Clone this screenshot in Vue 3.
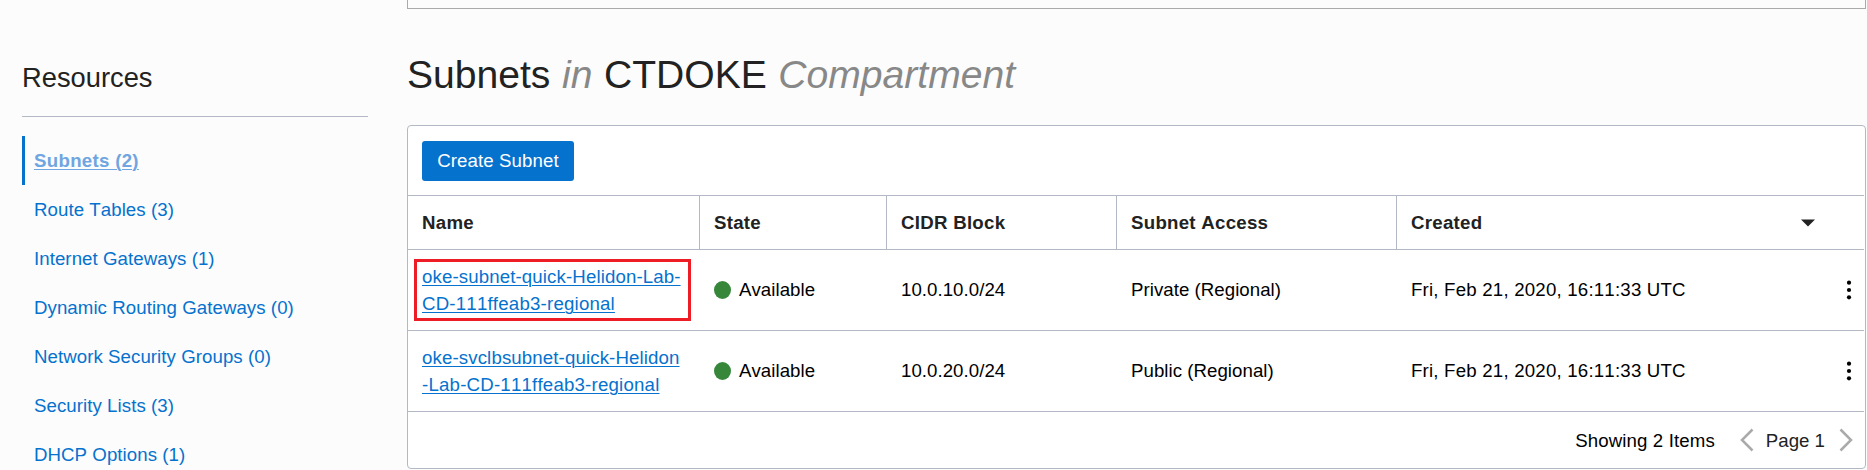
<script setup>
const resources = [
  { label: 'Subnets (2)', active: true },
  { label: 'Route Tables (3)' },
  { label: 'Internet Gateways (1)' },
  { label: 'Dynamic Routing Gateways (0)' },
  { label: 'Network Security Groups (0)' },
  { label: 'Security Lists (3)' },
  { label: 'DHCP Options (1)' },
]
const columns = ['Name', 'State', 'CIDR Block', 'Subnet Access', 'Created']
const subnets = [
  {
    name: ['oke-subnet-quick-Helidon-Lab-', 'CD-111ffeab3-regional'],
    state: 'Available', cidr: '10.0.10.0/24', access: 'Private (Regional)',
    created: 'Fri, Feb 21, 2020, 16:11:33 UTC', marked: true,
  },
  {
    name: ['oke-svclbsubnet-quick-Helidon', '-Lab-CD-111ffeab3-regional'],
    state: 'Available', cidr: '10.0.20.0/24', access: 'Public (Regional)',
    created: 'Fri, Feb 21, 2020, 16:11:33 UTC',
  },
]
</script>

<template>
  <div class="page">
    <aside class="sidebar">
      <h2 class="side-title">Resources</h2>
      <nav class="nav">
        <a v-for="r in resources" :key="r.label" class="nav-item" :class="{ active: r.active }">{{ r.label }}</a>
      </nav>
    </aside>
    <main class="main">
      <div class="previous-panel"></div>
      <h1 class="title">Subnets <em>in</em> CTDOKE <em>Compartment</em></h1>
      <section class="panel">
        <div class="toolbar"><button class="create">Create Subnet</button></div>
        <div class="row head">
          <div v-for="c in columns" :key="c" class="cell">
            {{ c }}
            <svg v-if="c === 'Created'" class="sort" width="14" height="8" viewBox="0 0 14 8"><path d="M0 0.5H14L7 7.5Z" fill="#222" /></svg>
          </div>
        </div>
        <div v-for="s in subnets" :key="s.cidr" class="row body">
          <div class="cell name">
            <a class="link"><span v-for="l in s.name" :key="l" class="line">{{ l }}</span></a>
            <span v-if="s.marked" class="marker"></span>
          </div>
          <div class="cell state"><i class="dot"></i><span class="text">{{ s.state }}</span></div>
          <div class="cell"><span class="text">{{ s.cidr }}</span></div>
          <div class="cell"><span class="text">{{ s.access }}</span></div>
          <div class="cell created">
            <span class="text">{{ s.created }}</span>
            <svg class="kebab" width="6" height="20" viewBox="0 0 6 20"><circle cx="3" cy="2.7" r="2.1" /><circle cx="3" cy="10" r="2.1" /><circle cx="3" cy="17.3" r="2.1" /></svg>
          </div>
        </div>
        <footer class="footer">
          <span class="count">Showing 2 Items</span>
          <svg class="chev" width="14" height="24" viewBox="0 0 14 24"><path d="M12.5 1.5L2 12L12.5 22.5" /></svg>
          <span class="page-no">Page 1</span>
          <svg class="chev" width="14" height="24" viewBox="0 0 14 24"><path d="M1.5 1.5L12 12L1.5 22.5" /></svg>
        </footer>
      </section>
    </main>
  </div>
</template>

<style>
body { background: #fcfcfc; overflow: hidden; }
</style>
<style scoped>
* { box-sizing: border-box; }
.page {
  display: flex; width: 1867px; height: 470px; overflow: hidden; background: #fcfcfc;
  font: 18.67px/27px "Liberation Sans", Arial, sans-serif; font-kerning: none; color: #000;
}
.sidebar { width: 346px; margin-left: 22px; flex: none; }
.side-title {
  margin: 0; height: 117px; padding-top: 62px; border-bottom: 1px solid #b3b9c4;
  font-size: 27.3px; line-height: 32px; font-weight: 400; color: #222;
}
.nav { display: flex; flex-direction: column; margin-top: 19px; }
.nav-item { height: 49px; line-height: 49px; padding-left: 12px; color: #0572ce; letter-spacing: 0.06px; white-space: nowrap; }
.nav-item.active {
  padding-left: 9px; border-left: 3px solid #0572ce; color: #6fa5e0; font-weight: 700; letter-spacing: 0.3px;
  text-decoration: underline; text-decoration-thickness: 1px; text-underline-offset: 2px;
}
.main { width: 1459px; margin-left: 39px; flex: none; }
.previous-panel { height: 9px; border: 1px solid #aaa; border-top: 0; }
.title { margin: 0; height: 116px; padding-top: 43px; font-size: 39.1px; line-height: 46px; font-weight: 400; word-spacing: 0.7px; color: #222; white-space: nowrap; }
.title em { color: #888; }
.panel { height: 344px; background: #fff; border: 1px solid #b3b9c4; border-radius: 4px; }
.toolbar { height: 69px; padding: 15px 14px; }
.create {
  display: block; width: 152px; height: 40px; padding: 0; border: 0; border-radius: 3px;
  background: #0572ce; color: #fff; font: inherit; letter-spacing: 0.1px; line-height: 40px; text-align: center;
}
.row { display: grid; grid-template-columns: 292px 187px 230px 280px 1fr; margin-right: 1px; border-top: 1px solid #b3b9c4; }
.cell { display: flex; align-items: center; padding-left: 14px; white-space: nowrap; }
.head { height: 54px; font-weight: 700; color: #222; letter-spacing: 0.27px; }
.head .cell { border-right: 1px solid #b3b9c4; }
.head .cell:last-child { border-right: 0; }
.sort { margin-left: auto; margin-right: 49px; }
.body { height: 81px; }
.body .text { padding-bottom: 2px; }
.cell .text { letter-spacing: 0.04px; }
.created .text { letter-spacing: 0.2px; }
.name { position: relative; }
.link { color: #0572ce; text-decoration: underline; text-decoration-thickness: 1px; text-underline-offset: 2px; }
.line { display: block; line-height: 27px; letter-spacing: 0.12px; }
.line:last-child { letter-spacing: 0.2px; }
.marker { position: absolute; left: 6px; top: 9px; width: 277px; height: 62px; border: 3px solid #ee1c24; }
.dot { width: 17px; height: 18px; margin-right: 8px; border-radius: 50%; background: #36873a; }
.kebab { margin-left: auto; margin-right: 12px; }
.footer { display: flex; align-items: center; justify-content: flex-end; height: 57px; margin-right: 1px; padding-right: 11px; border-top: 1px solid #b3b9c4; }
.count { margin-right: 25px; letter-spacing: 0.12px; }
.page-no { margin: 0 14px 0 12px; color: #222; }
.chev path { fill: none; stroke: #aaa; stroke-width: 2.5; }
</style>
